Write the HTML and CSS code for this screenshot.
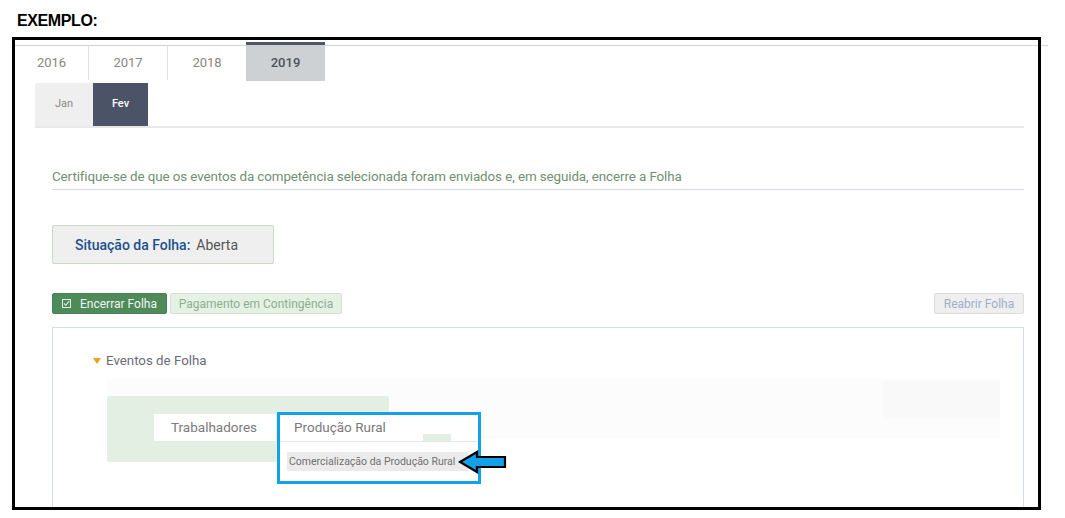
FILE: index.html
```html
<!DOCTYPE html>
<html lang="pt">
<head>
  <meta charset="UTF-8">
  <title>Exemplo - Folha</title>
  <link rel="stylesheet" href="styles.css">
</head>
<body>

  <div class="title">EXEMPLO:</div>

  <div class="frame">
    <div class="shot">

      <!-- Anos -->
      <div class="years">
        <div class="year">2016</div>
        <div class="year">2017</div>
        <div class="year">2018</div>
        <div class="year active">2019</div>
      </div>

      <div class="content">
        <!-- Meses -->
        <div class="months">
          <div class="month">Jan</div>
          <div class="month active">Fev</div>
        </div>

        <div class="main">
          <p class="desc">Certifique-se de que os eventos da competência selecionada foram enviados e, em seguida, encerre a Folha</p>

          <div class="status">
            <span class="status-label">Situação da Folha:</span>
            <span class="status-value">Aberta</span>
          </div>

          <div class="actions">
            <button class="btn btn-green">
              <svg width="9" height="9" viewBox="0 0 9 9">
                <rect x="0.5" y="0.5" width="8" height="8" fill="none" stroke="#dfeee2" stroke-width="1"/>
                <path d="M2 4.5 L3.8 6.3 L7.2 2.2" fill="none" stroke="#dfeee2" stroke-width="1.1"/>
              </svg>
              Encerrar Folha
            </button>
            <button class="btn btn-light-green">Pagamento em Contingência</button>
            <button class="btn btn-gray">Reabrir Folha</button>
          </div>

          <div class="panel">
            <div class="panel-title"><span class="caret"></span>Eventos de Folha</div>

            <div class="stage">
              <div class="green-block"></div>

              <!-- abas sobre o bloco -->
              <div class="subtabs">
                <div class="subtab">Trabalhadores</div>
                <div class="subpane">
                  <div class="subpane-head">
                    Produção Rural
                    <span class="chip"></span>
                  </div>
                  <span class="tag">Comercialização da Produção Rural</span>
                </div>
              </div>

              <!-- marcação -->
              <div class="highlight"></div>
              <svg class="arrow" width="50" height="26" viewBox="0 0 50 26">
                <polygon points="2,13 19,3 19,8 47,8 47,18 19,18 19,23" fill="#12a0e6" stroke="#000" stroke-width="2.2" stroke-linejoin="miter"/>
              </svg>
            </div>
          </div>
        </div>
      </div>

    </div>
  </div>

</body>
</html>
```

FILE: styles.css
```css
body {
  margin: 0;
  background: #fff;
  font-family: Roboto, "Liberation Sans", sans-serif;
}

/* Titulo do documento */
.title {
  height: 37px;
  box-sizing: border-box;
  padding: 12px 0 0 17px;
  font-family: "Liberation Sans", Arial, sans-serif;
  font-weight: bold;
  font-size: 16px;
  letter-spacing: -0.4px;
  line-height: 18px;
  color: #000;
}

/* Moldura preta */
.frame {
  position: relative;
  margin-left: 12px;
  width: 1036px;
  height: 473px;
  overflow: hidden;
}

.frame::after {
  content: '';
  position: absolute;
  left: 0;
  top: 0;
  width: 1029px;
  height: 473px;
  border: 3px solid #000;
  box-sizing: border-box;
  pointer-events: none;
  z-index: 5;
}

.shot {
  padding: 8px 0 0 3px;
}

/* Abas de ano */
.years {
  display: flex;
  align-items: flex-start;
  border-top: 1px solid #cdd4e6;
  margin-left: -3px;
  padding-left: 3px;
}

.year {
  height: 34px;
  line-height: 34px;
  text-align: center;
  font-size: 13px;
  color: #8a8580;
  border-right: 1px solid #e0e0e0;
  box-sizing: border-box;
}

.year:nth-child(1) { width: 74px; }
.year:nth-child(2) { width: 79px; }
.year:nth-child(3) { width: 78px; border-right: none; }

.year.active {
  width: 79px;
  height: 39px;
  margin-top: -4px;
  line-height: 36px;
  background: #cdd1d4;
  border-top: 3px solid #4e5566;
  border-right: none;
  color: #4d525c;
  font-weight: 500;
}

.content {
  margin-left: 20px;
  width: 989px;
}

/* Abas de mes */
.months {
  display: flex;
  margin-top: 2px;
  border-bottom: 2px solid #e8e8e8;
}

.month {
  height: 43px;
  line-height: 41px;
  text-align: center;
  font-size: 11px;
  color: #8a8a8a;
}

.month:first-child {
  width: 58px;
  background: #efefef;
}

.month.active {
  width: 55px;
  background: #4b5467;
  color: #fff;
  font-weight: 500;
}

.main {
  padding-left: 17px;
}

.desc {
  margin: 40px 0 0;
  padding-bottom: 3px;
  font-size: 13.4px;
  line-height: 18px;
  color: #6f8f72;
  border-bottom: 1px solid #d2d9ea;
  letter-spacing: -0.1px;
}

/* Situacao */
.status {
  display: flex;
  align-items: center;
  margin-top: 35px;
  width: 222px;
  height: 39px;
  box-sizing: border-box;
  padding-left: 22px;
  font-size: 14px;
  background: #efefef;
  border: 1px solid #c6dcc6;
  border-radius: 2px;
}

.status-label {
  color: #1d4f8d;
  font-weight: 500;
  margin-right: 6px;
}

.status-value {
  color: #555;
}

/* Botoes */
.actions {
  display: flex;
  gap: 3px;
  margin-top: 29px;
}

.btn {
  height: 21px;
  padding: 0;
  font-family: Roboto, "Liberation Sans", sans-serif;
  font-size: 12px;
  white-space: nowrap;
  border-radius: 2px;
  border: 1px solid transparent;
  display: flex;
  align-items: center;
  justify-content: center;
  box-sizing: border-box;
}

.btn svg {
  margin-right: 9px;
}

.btn-green {
  width: 115px;
  background: #4f8a5b;
  border-color: #4a8256;
  color: #f0f6f0;
}

.btn-light-green {
  width: 172px;
  background: #e4f1e4;
  border-color: #cfe3cf;
  color: #8fae8f;
}

.btn-gray {
  margin-left: auto;
  width: 90px;
  background: #efefef;
  border-color: #dcdcdc;
  color: #9eb0c6;
}

/* Painel */
.panel {
  margin-top: 13px;
  height: 200px;
  border: 1px solid #d6dcea;
  padding-top: 22px;
  box-sizing: border-box;
}

.panel-title {
  display: flex;
  align-items: center;
  padding-left: 40px;
  height: 20px;
  font-size: 13.3px;
  color: #6a6a78;
}

.caret {
  width: 0;
  height: 0;
  border-left: 4px solid transparent;
  border-right: 4px solid transparent;
  border-top: 6px solid #f2a11f;
  margin-right: 5px;
  margin-top: 2px;
}

.stage {
  position: relative;
  margin: 9px 0 0 54px;
  width: 893px;
  height: 110px;
  padding-top: 17px;
  box-sizing: border-box;
  background:
    linear-gradient(#f9f9f9, #f9f9f9) right 0 top 2px / 117px 38px no-repeat,
    linear-gradient(#fcfcfc, #fcfcfc) left top / 100% 60px no-repeat;
}

.green-block {
  width: 282px;
  height: 66px;
  background: #e3efe3;
  border-radius: 2px;
}

.subtabs {
  position: absolute;
  left: 47px;
  top: 35px;
  display: flex;
  gap: 2px;
}

.subtab {
  width: 122px;
  height: 27px;
  line-height: 27px;
  background: #fff;
  padding-left: 17px;
  box-sizing: border-box;
  font-size: 13.5px;
  color: #7a7a7a;
}

.subpane {
  width: 200px;
  height: 72px;
  background: #fff;
}

.subpane-head {
  position: relative;
  height: 27px;
  line-height: 27px;
  padding-left: 16px;
  font-size: 13.5px;
  color: #7a7a7a;
  border-bottom: 1px solid #e6e6e6;
}

.chip {
  position: absolute;
  left: 145px;
  bottom: 0;
  width: 28px;
  height: 7px;
  background: #e3efe3;
}

.tag {
  display: inline-block;
  margin: 10px 0 0 9px;
  padding: 0 13px 0 2px;
  height: 19px;
  line-height: 19px;
  font-size: 10.5px;
  color: #707070;
  background: #ebebeb;
}

.highlight {
  position: absolute;
  left: 170px;
  top: 33px;
  width: 204px;
  height: 72px;
  border: 3px solid #11a2e8;
  box-sizing: border-box;
}

.arrow {
  position: absolute;
  left: 351px;
  top: 70px;
}
```
